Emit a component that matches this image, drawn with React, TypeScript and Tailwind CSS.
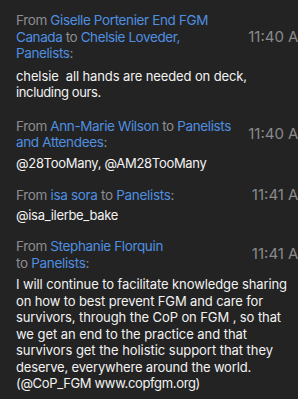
import React, { useLayoutEffect, useRef, useState } from "react";

const blue = "text-[#4f8fe0]";
const gray = "text-[#8d8d92]";

function Fit({ w, children }: { w: number; children: React.ReactNode }) {
  const ref = useRef<HTMLSpanElement>(null);
  const [ls, setLs] = useState(0);
  useLayoutEffect(() => {
    const el = ref.current;
    if (!el) return;
    el.style.letterSpacing = "0px";
    const natural = el.getBoundingClientRect().width;
    const n = (el.textContent || "").length;
    setLs(n ? (w - natural) / n : 0);
  }, [w]);
  return (
    <div className="whitespace-pre">
      <span ref={ref} style={{ letterSpacing: `${ls}px` }}>
        {children}
      </span>
    </div>
  );
}

type Line = { w: number; c: React.ReactNode };

function Row({
  header,
  time,
  body,
  className = "",
  bodyClass = "mt-[6px]",
}: {
  header: Line[];
  time: string;
  body: Line[];
  className?: string;
  bodyClass?: string;
}) {
  return (
    <div className={className}>
      <div className="flex items-center">
        <div className="w-[225px] shrink-0 text-[13.5px] leading-[16.5px]">
          {header.map((h, i) => (
            <Fit key={i} w={h.w}>
              {h.c}
            </Fit>
          ))}
        </div>
        <div className="flex-1 whitespace-nowrap text-right text-[15px] leading-[16.5px] text-[#8a8a8a]">
          {time}
        </div>
      </div>
      <div className={`${bodyClass} text-[13px] leading-[16.5px] text-[#f2f2f2]`}>
        {body.map((b, i) => (
          <Fit key={i} w={b.w}>
            {b.c}
          </Fit>
        ))}
      </div>
    </div>
  );
}

export default function App() {
  return (
    <div
      className="w-[298px] h-[399px] overflow-hidden bg-[#232323]"
      style={{ fontFamily: "Inter, 'Noto Sans', sans-serif" }}
    >
      <div className="w-[312px] pl-[16px] pt-[12px]">
        <Row
          header={[
            {
              w: 192,
              c: (
                <>
                  <span className={gray}>From </span>
                  <span className={blue}>Giselle Portenier End FGM</span>
                </>
              ),
            },
            {
              w: 164,
              c: (
                <>
                  <span className={blue}>Canada</span>
                  <span className={gray}> to </span>
                  <span className={blue}>Chelsie Loveder,</span>
                </>
              ),
            },
            {
              w: 57,
              c: (
                <>
                  <span className={blue}>Panelists</span>
                  <span className={gray}>:</span>
                </>
              ),
            },
          ]}
          time="11:40 AM"
          body={[
            { w: 231, c: "chelsie  all hands are needed on deck," },
            { w: 85, c: "including ours." },
          ]}
        />
        <Row
          className="mt-[17px]"
          header={[
            {
              w: 215,
              c: (
                <>
                  <span className={gray}>From </span>
                  <span className={blue}>Ann-Marie Wilson</span>
                  <span className={gray}> to </span>
                  <span className={blue}>Panelists</span>
                </>
              ),
            },
            {
              w: 91,
              c: (
                <>
                  <span className={blue}>and Attendees</span>
                  <span className={gray}>:</span>
                </>
              ),
            },
          ]}
          time="11:40 AM"
          body={[{ w: 191, c: "@28TooMany, @AM28TooMany" }]}
          bodyClass="mt-[4px]"
        />
        <Row
          className="mt-[16px]"
          header={[
            {
              w: 158,
              c: (
                <>
                  <span className={gray}>From </span>
                  <span className={blue}>isa sora</span>
                  <span className={gray}> to </span>
                  <span className={blue}>Panelists</span>
                  <span className={gray}>:</span>
                </>
              ),
            },
          ]}
          time="11:41 AM"
          body={[{ w: 102, c: "@isa_ilerbe_bake" }]}
          bodyClass="mt-[3px]"
        />
        <Row
          className="mt-[15px]"
          header={[
            {
              w: 147,
              c: (
                <>
                  <span className={gray}>From </span>
                  <span className={blue}>Stephanie Florquin</span>
                </>
              ),
            },
            {
              w: 73,
              c: (
                <>
                  <span className={gray}>to </span>
                  <span className={blue}>Panelists</span>
                  <span className={gray}>:</span>
                </>
              ),
            },
          ]}
          time="11:41 AM"
          body={[
            { w: 271, c: "I will continue to facilitate knowledge sharing" },
            { w: 247, c: "on how to best prevent FGM and care for" },
            { w: 265, c: "survivors, through the CoP on FGM , so that" },
            { w: 231, c: "we get an end to the practice and that" },
            { w: 257, c: "survivors get the holistic support that they" },
            { w: 235, c: "deserve, everywhere around the world." },
            { w: 184, c: "(@CoP_FGM www.copfgm.org)" },
          ]}
          bodyClass="mt-[5px]"
        />
      </div>
    </div>
  );
}
